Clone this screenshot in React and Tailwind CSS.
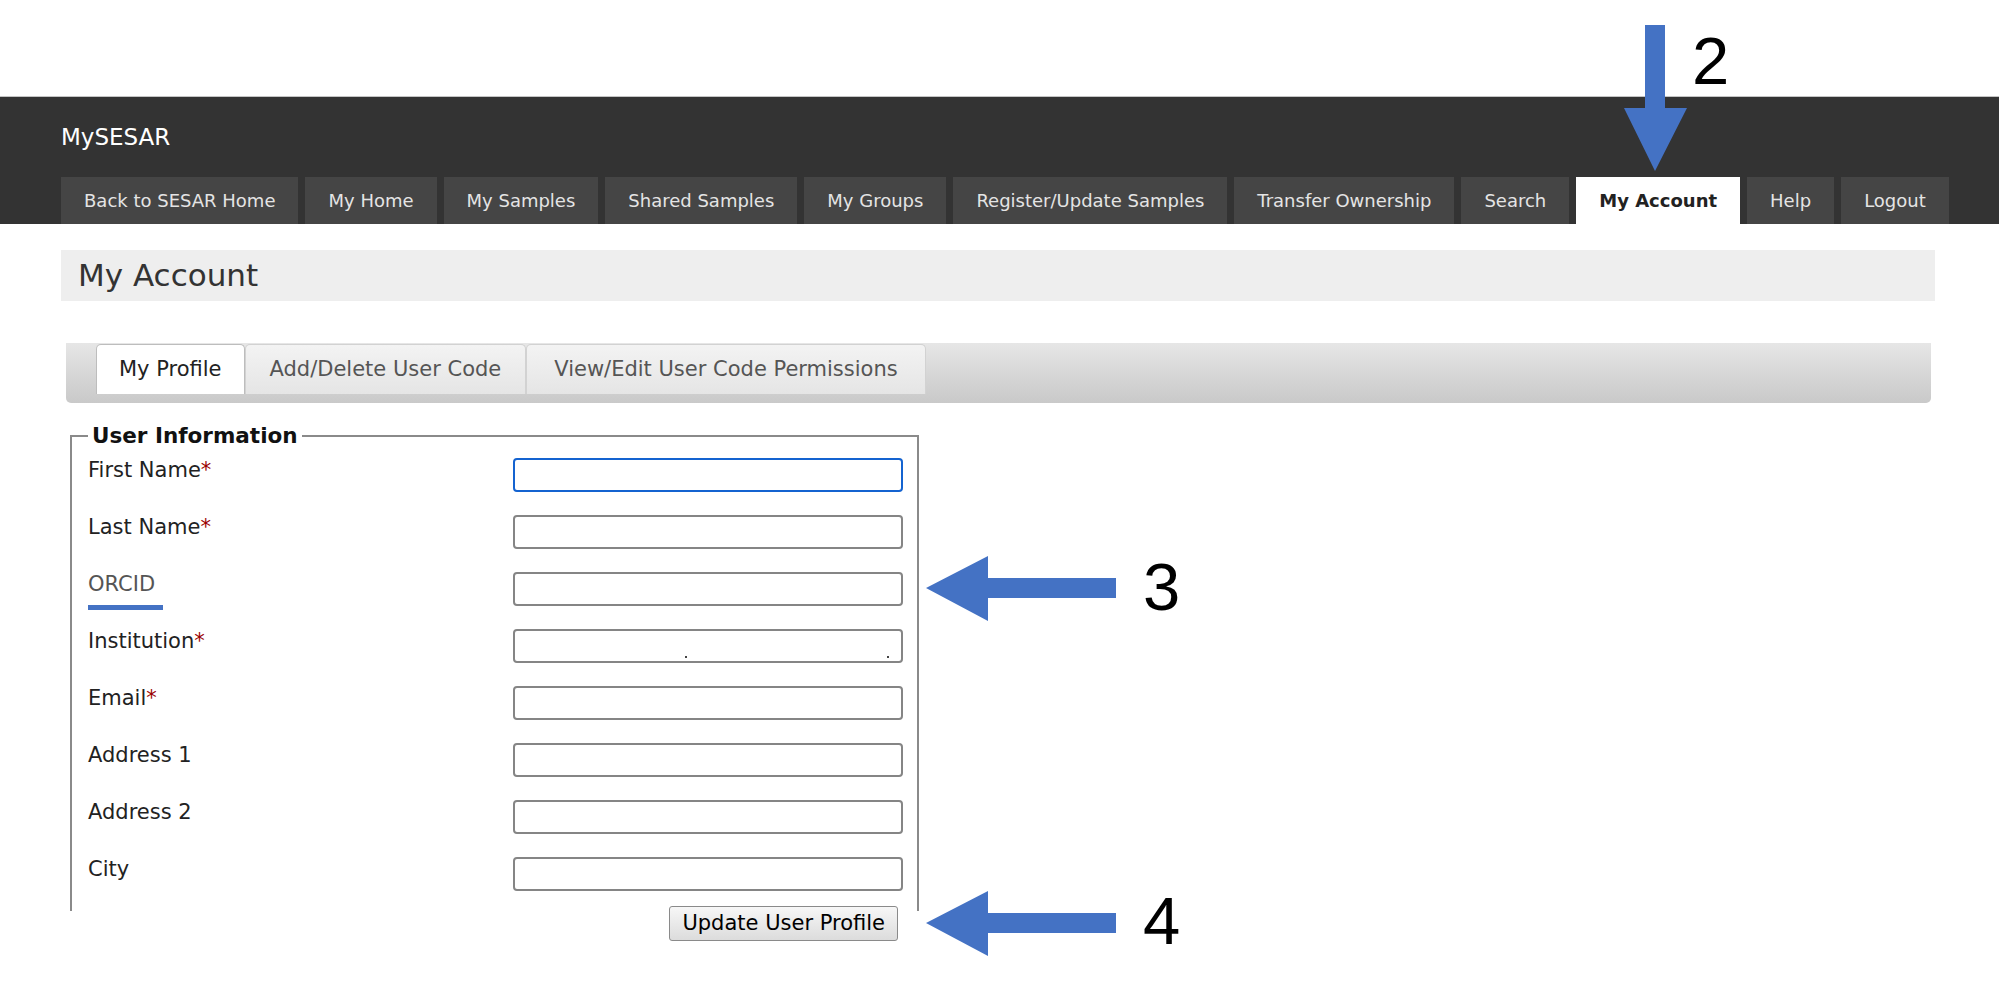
import React from 'react';

const navItems = [
  'Back to SESAR Home',
  'My Home',
  'My Samples',
  'Shared Samples',
  'My Groups',
  'Register/Update Samples',
  'Transfer Ownership',
  'Search',
  'My Account',
  'Help',
  'Logout',
];

const fields = [
  { label: 'First Name', required: true, focused: true },
  { label: 'Last Name', required: true },
  { label: 'ORCID', orcid: true },
  { label: 'Institution', required: true, dots: true },
  { label: 'Email', required: true },
  { label: 'Address 1' },
  { label: 'Address 2' },
  { label: 'City' },
];

function DownArrow() {
  return (
    <svg width="64" height="147" viewBox="0 0 64 147" className="absolute left-[1624px] top-[25px]">
      <polygon points="21,0 41,0 41,83 63,83 31,146 0,83 21,83" fill="#4472c4" />
    </svg>
  );
}

function LeftArrow({ top }) {
  return (
    <svg width="191" height="65" viewBox="0 0 191 65" className="absolute left-[926px]" style={{ top }}>
      <polygon points="0,32 62,0 62,22 190,22 190,42 62,42 62,65" fill="#4472c4" />
    </svg>
  );
}

export default function App() {
  return (
    <div className="relative min-h-screen bg-white font-['DejaVu_Sans',Verdana,sans-serif] text-[#222]">
      <div className="h-[96px]" />

      <header className="h-[128px] bg-[#333] border-t border-[#c4c4c4] pl-[61px] pr-[30px] flex flex-col">
        <div className="h-[84px] flex items-center text-white text-[23px]">MySESAR</div>
        <nav className="flex gap-[7px] mt-auto">
          {navItems.map((item) => (
            <div
              key={item}
              className={
                item === 'My Account'
                  ? 'shrink-0 whitespace-nowrap h-[47px] px-[23px] flex items-center bg-white text-[#222] text-[18px] font-bold'
                  : 'shrink-0 whitespace-nowrap h-[47px] px-[23px] flex items-center bg-[#454545] text-[#e4e4e4] text-[18px]'
              }
            >
              {item}
            </div>
          ))}
        </nav>
      </header>

      <main className="pl-[61px] pr-[64px]">
        <div className="mt-[26px] h-[51px] bg-[#eeeeee] flex items-center pl-[17px] text-[31px] text-[#333]">
          My Account
        </div>

        <div className="mt-[42px] ml-[5px] mr-[4px] h-[60px] pt-[1px] pl-[30px] flex items-start rounded-b-[5px] bg-gradient-to-b from-[#e6e6e6] to-[#c9c9c9]">
          <div className="h-[50px] px-[22px] flex items-center bg-white border border-b-0 border-[#bdbdbd] rounded-t-[5px] text-[21px] text-[#222]">
            My Profile
          </div>
          <div className="h-[50px] px-[24px] flex items-center bg-gradient-to-b from-[#f3f3f3] to-[#e5e5e5] border border-b-0 border-[#d2d2d2] rounded-t-[5px] text-[21px] text-[#555]">
            Add/Delete User Code
          </div>
          <div className="h-[50px] px-[27px] flex items-center bg-gradient-to-b from-[#f3f3f3] to-[#e5e5e5] border border-b-0 border-[#d2d2d2] rounded-t-[5px] text-[21px] text-[#555]">
            View/Edit User Code Permissions
          </div>
        </div>

        <div className="ml-[9px] w-[849px] mt-[20px]">
          <fieldset className="border-2 border-b-0 border-[#8a8a8a] pl-[16px] pr-[14px] pb-[20px]">
            <legend className="px-[4px] text-[21.5px] font-bold leading-[26px] text-[#111]">
              User Information
            </legend>
            <div className="flex flex-col gap-[23px] mt-[9px]">
              {fields.map((f) => (
                <div key={f.label} className="flex items-start h-[34px]">
                  <div className="w-[425px] text-[21px] leading-[24px]">
                    <span className={f.orcid ? 'text-[#555]' : 'text-[#222]'}>{f.label}</span>
                    {f.required && <span className="text-[#9b0000]">*</span>}
                    {f.orcid && <div className="mt-[9px] h-[5px] w-[75px] bg-[#4472c4]" />}
                  </div>
                  <div className="relative">
                    <input
                      type="text"
                      className={
                        f.focused
                          ? 'block w-[390px] h-[34px] border-2 border-[#1463d0] rounded-[4px] bg-white outline-none'
                          : 'block w-[390px] h-[34px] border-2 border-[#858585] rounded-[4px] bg-white outline-none'
                      }
                    />
                    {f.dots && (
                      <>
                        <span className="absolute left-[172px] top-[27px] w-[2px] h-[2px] bg-[#444]" />
                        <span className="absolute left-[374px] top-[27px] w-[2px] h-[2px] bg-[#444]" />
                      </>
                    )}
                  </div>
                </div>
              ))}
            </div>
          </fieldset>
          <div className="flex justify-end pr-[21px] mt-[-5px]">
            <button className="h-[35px] px-[12px] border border-[#8a8a8a] rounded-[3px] bg-gradient-to-b from-[#f7f7f7] to-[#dcdcdc] text-[21px] text-black">
              Update User Profile
            </button>
          </div>
        </div>
      </main>

      <DownArrow />
      <div className="absolute left-[1692px] top-[27px] text-[67px] leading-none font-['Liberation_Sans',Arial,sans-serif] text-black">
        2
      </div>

      <LeftArrow top={556} />
      <div className="absolute left-[1143px] top-[553px] text-[67px] leading-none font-['Liberation_Sans',Arial,sans-serif] text-black">
        3
      </div>

      <LeftArrow top={891} />
      <div className="absolute left-[1143px] top-[887px] text-[67px] leading-none font-['Liberation_Sans',Arial,sans-serif] text-black">
        4
      </div>
    </div>
  );
}
